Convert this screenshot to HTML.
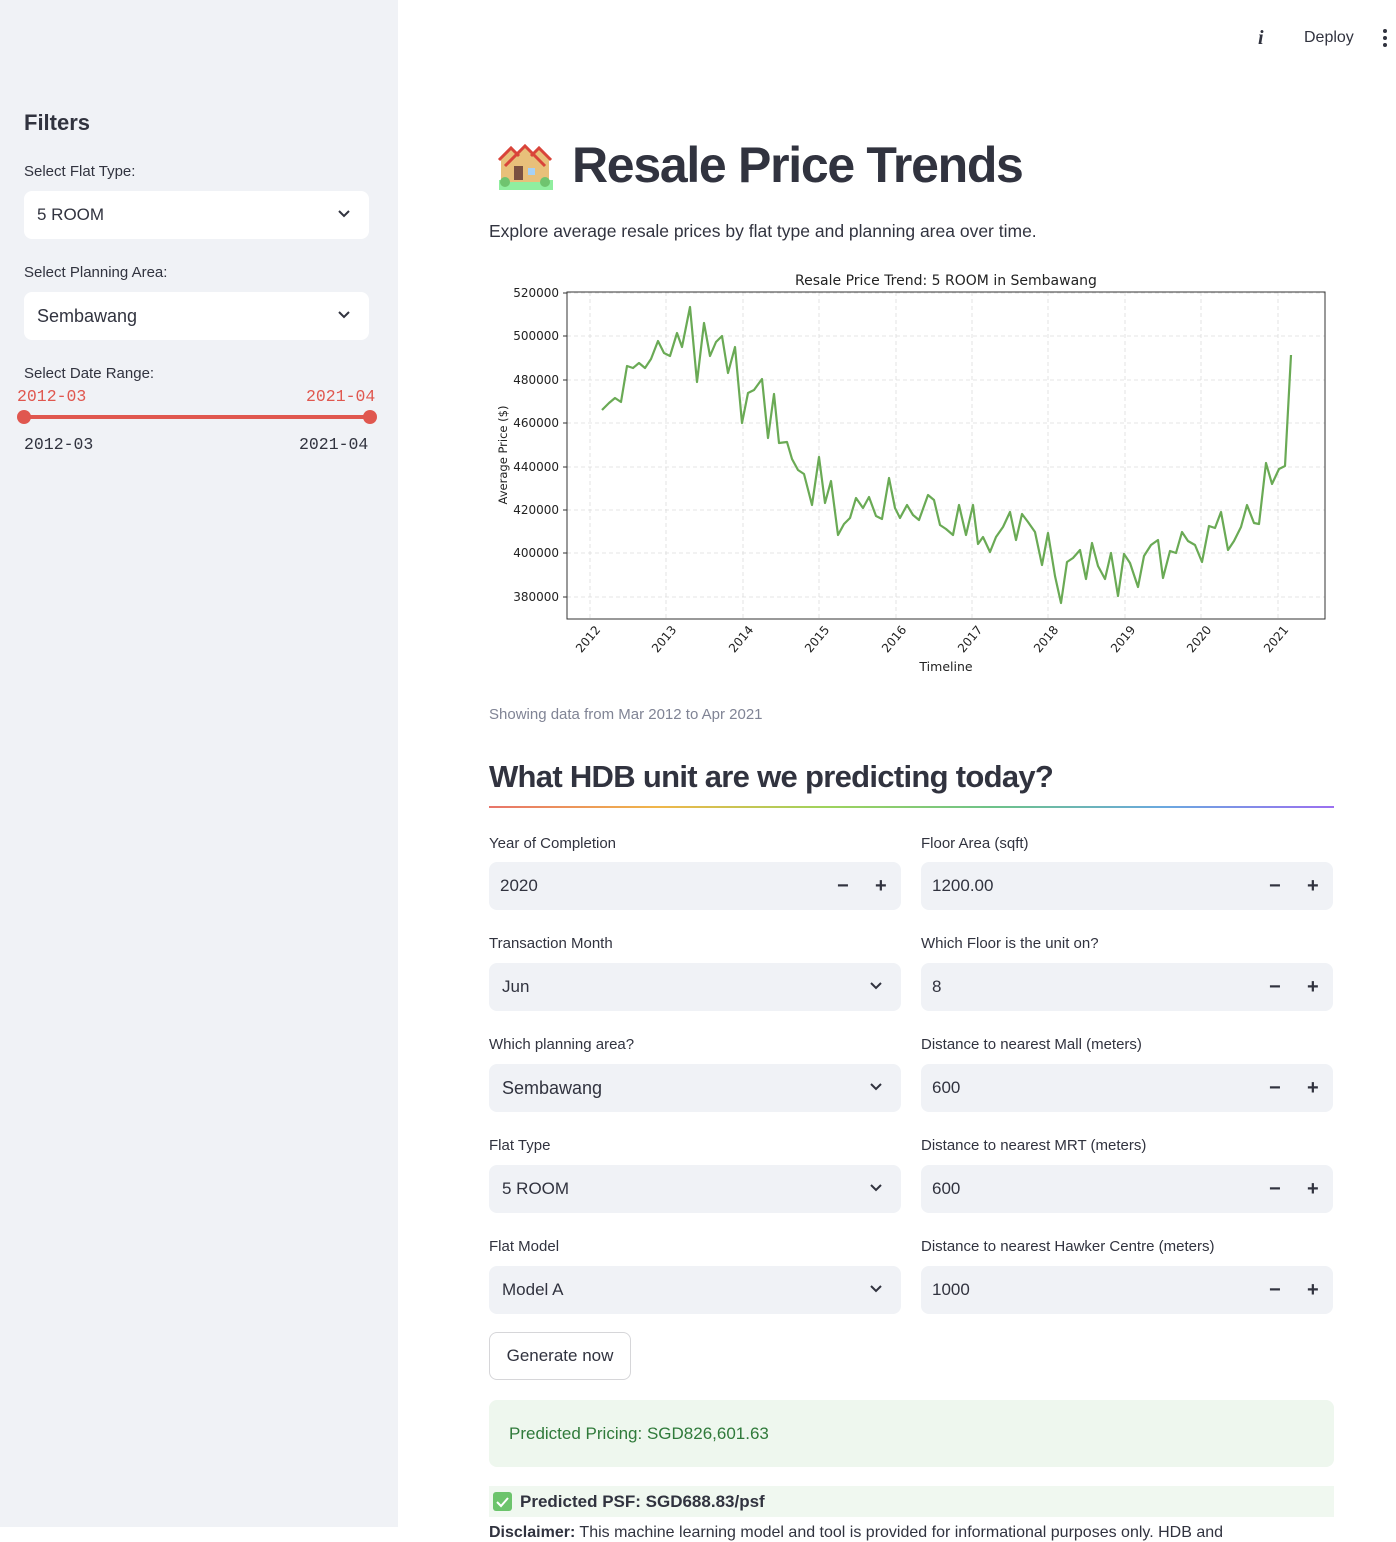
<!DOCTYPE html>
<html><head><meta charset="utf-8">
<style>
*{box-sizing:border-box;margin:0;padding:0}
html,body{width:1396px;height:1527px;overflow:hidden;background:#fff;font-family:"Liberation Sans",sans-serif;color:#31333f}
.a{position:absolute}
#side{left:0;top:0;width:398px;height:1527px;background:#f0f2f6}
.lbl{font-size:15px;color:#31333f;white-space:nowrap}
.box{border-radius:8px;height:48px;font-size:17px;display:flex;align-items:center;padding-left:13px}
.w{background:#fff}
.g{background:#f0f2f6}
.chev{position:absolute;right:18px;top:18px}
.pm{position:absolute;top:0;height:48px;font-size:20px;font-weight:bold;display:flex;align-items:center}
.mono{font-family:"Liberation Mono",monospace;font-size:16.5px}
</style></head><body>
<div id="side" class="a">
  <div class="a" style="left:24px;top:110px;font-size:22px;font-weight:bold">Filters</div>
  <div class="a lbl" style="left:24px;top:163px">Select Flat Type:</div>
  <div class="a box w" style="left:24px;top:191px;width:345px">5 ROOM<svg class="chev" width="14" height="10" viewBox="0 0 14 10"><path d="M2 2l5 5 5-5" fill="none" stroke="#31333f" stroke-width="2"/></svg></div>
  <div class="a lbl" style="left:24px;top:264px">Select Planning Area:</div>
  <div class="a box w" style="left:24px;top:292px;width:345px;font-size:18px">Sembawang<svg class="chev" width="14" height="10" viewBox="0 0 14 10"><path d="M2 2l5 5 5-5" fill="none" stroke="#31333f" stroke-width="2"/></svg></div>
  <div class="a lbl" style="left:24px;top:365px">Select Date Range:</div>
  <div class="a mono" style="left:17px;top:387px;color:#e0574f">2012-03</div>
  <div class="a mono" style="left:306px;top:387px;color:#e0574f">2021-04</div>
  <div class="a" style="left:24px;top:415px;width:345px;height:4px;background:#e0574f"></div>
  <div class="a" style="left:17px;top:410px;width:14px;height:14px;border-radius:50%;background:#e0574f"></div>
  <div class="a" style="left:363px;top:410px;width:14px;height:14px;border-radius:50%;background:#e0574f"></div>
  <div class="a mono" style="left:24px;top:435px">2012-03</div>
  <div class="a mono" style="left:299px;top:435px">2021-04</div>
</div>

<div class="a" style="left:1258px;top:27px;font-size:20px;font-weight:bold;font-style:italic;font-family:'Liberation Serif',serif">i</div>
<div class="a" style="left:1304px;top:29px;font-size:16px">Deploy</div>
<div class="a" style="left:1383px;top:29px;width:4px">
  <div style="width:4px;height:4px;border-radius:50%;background:#31333f;margin-bottom:3px"></div>
  <div style="width:4px;height:4px;border-radius:50%;background:#31333f;margin-bottom:3px"></div>
  <div style="width:4px;height:4px;border-radius:50%;background:#31333f"></div>
</div>

<svg class="a" style="left:497px;top:140px" width="56" height="50" viewBox="0 0 56 50">
  <rect x="2" y="40" width="54" height="10" fill="#90ee9f"/>
  <polygon points="4,18 14,8 24,18 24,42 4,42" fill="#e8c07a"/>
  <polygon points="32,18 42,8 52,18 52,42 32,42" fill="#e8c07a"/>
  <polygon points="10,24 28,6 46,24 46,42 10,42" fill="#e8c07a"/>
  <path d="M2 20 14 8 22 16M34 16 42 8 54 20M8 26 28 6 48 26" fill="none" stroke="#d9443a" stroke-width="3"/>
  <rect x="17" y="26" width="9" height="14" fill="#7a5140"/>
  <rect x="31" y="28" width="7" height="7" fill="#a6d1f5"/>
  <circle cx="8" cy="42" r="5" fill="#6fc46f"/><circle cx="48" cy="42" r="5" fill="#6fc46f"/>
</svg>
<div class="a" style="left:572px;top:136px;font-size:50px;font-weight:bold;letter-spacing:-1.3px">Resale Price Trends</div>
<div class="a" style="left:489px;top:221px;font-size:17.5px">Explore average resale prices by flat type and planning area over time.</div>

<svg class="a" style="left:480px;top:262px" width="870" height="420" viewBox="480 262 870 420" font-family="DejaVu Sans, sans-serif">
  <g stroke="#ddd" stroke-dasharray="4,3" stroke-width="0.8">
    <line x1="567" x2="1325" y1="293" y2="293"/><line x1="567" x2="1325" y1="336" y2="336"/><line x1="567" x2="1325" y1="380" y2="380"/><line x1="567" x2="1325" y1="423" y2="423"/><line x1="567" x2="1325" y1="467" y2="467"/><line x1="567" x2="1325" y1="510" y2="510"/><line x1="567" x2="1325" y1="553" y2="553"/><line x1="567" x2="1325" y1="597" y2="597"/>
    <line y1="292" y2="619" x1="590" x2="590"/><line y1="292" y2="619" x1="666" x2="666"/><line y1="292" y2="619" x1="743" x2="743"/><line y1="292" y2="619" x1="819" x2="819"/><line y1="292" y2="619" x1="896" x2="896"/><line y1="292" y2="619" x1="972" x2="972"/><line y1="292" y2="619" x1="1048" x2="1048"/><line y1="292" y2="619" x1="1125" x2="1125"/><line y1="292" y2="619" x1="1201" x2="1201"/><line y1="292" y2="619" x1="1278" x2="1278"/>
  </g>
  <rect x="567" y="292" width="758" height="327" fill="none" stroke="#333" stroke-width="1"/>
  <polyline fill="none" stroke="#6aaa55" stroke-width="2.2" stroke-linejoin="round" points="602,410 609,403 615,398 621,402 627,366 633,368 639,363 645,368 651,359 658,341 664,353 670,356 677,333 682,347 690,307 697,382 704,323 710,356 716,342 722,336 728,373 735,347 742,423 748,393 754,390 762,379 768,438 774,394 779,443 787,442 792,459 798,470 804,474 812,505 819,457 825,503 831,481 838,535 844,524 850,518 856,498 863,508 869,497 876,516 882,519 889,478 895,508 900,518 907,505 913,515 919,520 928,495 934,500 940,525 946,529 953,535 959,505 966,535 973,505 978,544 983,537 990,552 996,537 1003,527 1010,512 1016,540 1022,514 1028,522 1035,532 1042,565 1048,533 1055,576 1061,603 1067,562 1073,558 1080,550 1086,579 1092,543 1098,566 1105,579 1111,553 1118,596 1124,554 1130,563 1138,587 1144,556 1151,545 1158,540 1163,578 1170,551 1176,553 1182,532 1188,541 1195,545 1202,562 1209,526 1215,528 1221,512 1228,550 1234,541 1241,527 1247,505 1254,523 1259,524 1266,463 1272,484 1279,469 1285,466 1291,355"/>
  <g font-size="12" fill="#222" text-anchor="end">
    <text x="559" y="297">520000</text><text x="559" y="340">500000</text><text x="559" y="384">480000</text><text x="559" y="427">460000</text><text x="559" y="471">440000</text><text x="559" y="514">420000</text><text x="559" y="557">400000</text><text x="559" y="601">380000</text>
  </g>
  <g stroke="#333"><line x1="563" x2="567" y1="293" y2="293"/><line x1="563" x2="567" y1="336" y2="336"/><line x1="563" x2="567" y1="380" y2="380"/><line x1="563" x2="567" y1="423" y2="423"/><line x1="563" x2="567" y1="467" y2="467"/><line x1="563" x2="567" y1="510" y2="510"/><line x1="563" x2="567" y1="553" y2="553"/><line x1="563" x2="567" y1="597" y2="597"/></g>
  <g font-size="12" fill="#222" text-anchor="end">
    <text transform="translate(601,630) rotate(-50)">2012</text><text transform="translate(677,630) rotate(-50)">2013</text><text transform="translate(754,630) rotate(-50)">2014</text><text transform="translate(830,630) rotate(-50)">2015</text><text transform="translate(907,630) rotate(-50)">2016</text><text transform="translate(983,630) rotate(-50)">2017</text><text transform="translate(1059,630) rotate(-50)">2018</text><text transform="translate(1136,630) rotate(-50)">2019</text><text transform="translate(1212,630) rotate(-50)">2020</text><text transform="translate(1289,630) rotate(-50)">2021</text>
  </g>
  <text x="946" y="671" font-size="12.5" text-anchor="middle" fill="#222">Timeline</text>
  <text x="946" y="285" font-size="14" text-anchor="middle" fill="#222">Resale Price Trend: 5 ROOM in Sembawang</text>
  <text transform="translate(507,455) rotate(-90)" font-size="11.5" text-anchor="middle" fill="#222">Average Price ($)</text>
</svg>

<div class="a" style="left:489px;top:706px;font-size:15px;color:#808495">Showing data from Mar 2012 to Apr 2021</div>
<div class="a" style="left:489px;top:759px;font-size:31px;font-weight:bold;letter-spacing:-0.7px">What HDB unit are we predicting today?</div>
<div class="a" style="left:489px;top:806px;width:845px;height:2px;background:linear-gradient(90deg,#e8746a,#f0b64a,#9ed35c,#6dc28a,#6aa8e0,#9b6ff0)"></div>

<div class="a lbl" style="left:489px;top:835px">Year of Completion</div>
<div class="a box g" style="left:489px;top:862px;width:412px;padding-left:11px">2020<span class="pm" style="left:348px">−</span><span class="pm" style="left:386px">+</span></div>
<div class="a lbl" style="left:489px;top:935px">Transaction Month</div>
<div class="a box g" style="left:489px;top:963px;width:412px">Jun<svg class="chev" width="14" height="10" viewBox="0 0 14 10"><path d="M2 2l5 5 5-5" fill="none" stroke="#31333f" stroke-width="2"/></svg></div>
<div class="a lbl" style="left:489px;top:1036px">Which planning area?</div>
<div class="a box g" style="left:489px;top:1064px;width:412px;font-size:18px">Sembawang<svg class="chev" width="14" height="10" viewBox="0 0 14 10"><path d="M2 2l5 5 5-5" fill="none" stroke="#31333f" stroke-width="2"/></svg></div>
<div class="a lbl" style="left:489px;top:1137px">Flat Type</div>
<div class="a box g" style="left:489px;top:1165px;width:412px">5 ROOM<svg class="chev" width="14" height="10" viewBox="0 0 14 10"><path d="M2 2l5 5 5-5" fill="none" stroke="#31333f" stroke-width="2"/></svg></div>
<div class="a lbl" style="left:489px;top:1238px">Flat Model</div>
<div class="a box g" style="left:489px;top:1266px;width:412px">Model A<svg class="chev" width="14" height="10" viewBox="0 0 14 10"><path d="M2 2l5 5 5-5" fill="none" stroke="#31333f" stroke-width="2"/></svg></div>

<div class="a lbl" style="left:921px;top:835px">Floor Area (sqft)</div>
<div class="a box g" style="left:921px;top:862px;width:412px;padding-left:11px">1200.00<span class="pm" style="left:348px">−</span><span class="pm" style="left:386px">+</span></div>
<div class="a lbl" style="left:921px;top:935px">Which Floor is the unit on?</div>
<div class="a box g" style="left:921px;top:963px;width:412px;padding-left:11px">8<span class="pm" style="left:348px">−</span><span class="pm" style="left:386px">+</span></div>
<div class="a lbl" style="left:921px;top:1036px">Distance to nearest Mall (meters)</div>
<div class="a box g" style="left:921px;top:1064px;width:412px;padding-left:11px">600<span class="pm" style="left:348px">−</span><span class="pm" style="left:386px">+</span></div>
<div class="a lbl" style="left:921px;top:1137px">Distance to nearest MRT (meters)</div>
<div class="a box g" style="left:921px;top:1165px;width:412px;padding-left:11px">600<span class="pm" style="left:348px">−</span><span class="pm" style="left:386px">+</span></div>
<div class="a lbl" style="left:921px;top:1238px">Distance to nearest Hawker Centre (meters)</div>
<div class="a box g" style="left:921px;top:1266px;width:412px;padding-left:11px">1000<span class="pm" style="left:348px">−</span><span class="pm" style="left:386px">+</span></div>

<div class="a" style="left:489px;top:1332px;width:142px;height:48px;border:1px solid #d6d6d9;border-radius:8px;font-size:17px;display:flex;align-items:center;justify-content:center">Generate now</div>

<div class="a" style="left:489px;top:1400px;width:845px;height:67px;background:#eef7ee;border-radius:8px;font-size:17px;color:#2f7a3a;display:flex;align-items:center;padding-left:20px">Predicted Pricing: SGD826,601.63</div>

<div class="a" style="left:489px;top:1486px;width:845px;height:31px;background:#f0f8f0;display:flex;align-items:center;padding-left:4px;font-size:17px;font-weight:bold">
  <span style="display:inline-block;width:19px;height:19px;background:#6cc46c;border-radius:3px;margin-right:8px;position:relative"><svg width="19" height="19" viewBox="0 0 19 19" style="position:absolute;left:0;top:0"><path d="M4 10l4 4 7-8" fill="none" stroke="#fff" stroke-width="2"/></svg></span>Predicted PSF: SGD688.83/psf
</div>
<div class="a" style="left:489px;top:1524px;font-size:16px;white-space:nowrap"><b>Disclaimer:</b> This machine learning model and tool is provided for informational purposes only. HDB and</div>
</body></html>
